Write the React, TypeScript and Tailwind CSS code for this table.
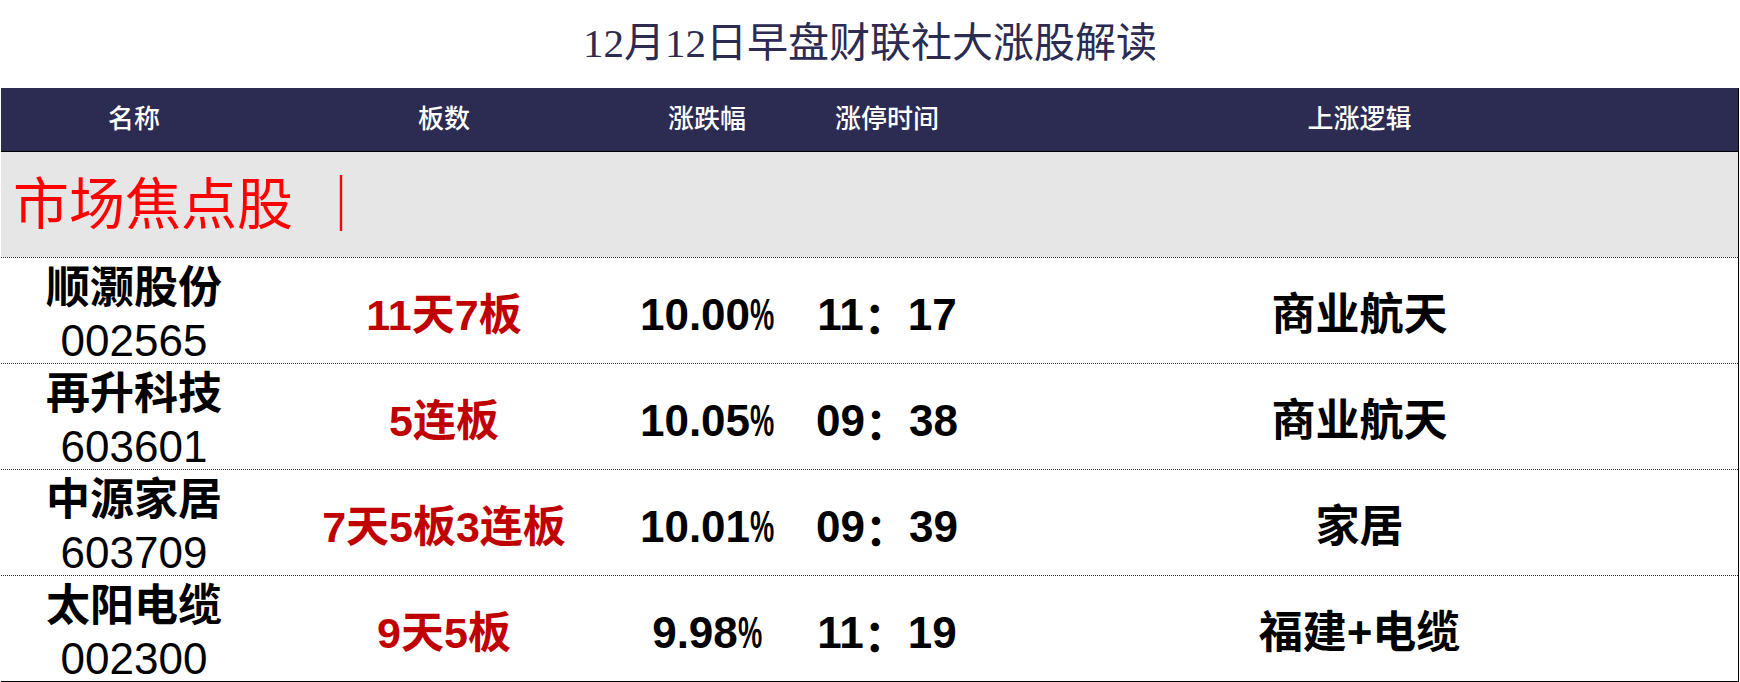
import React from "react";

const rows = [
  { name: "顺灏股份", code: "002565", board: "11天7板", pct: "10.00", hh: "11", mm: "17", logic: "商业航天" },
  { name: "再升科技", code: "603601", board: "5连板", pct: "10.05", hh: "09", mm: "38", logic: "商业航天" },
  { name: "中源家居", code: "603709", board: "7天5板3连板", pct: "10.01", hh: "09", mm: "39", logic: "家居" },
  { name: "太阳电缆", code: "002300", board: "9天5板", pct: "9.98", hh: "11", mm: "19", logic: "福建+电缆" },
];

const cols = "grid grid-cols-[266px_354px_172px_188px_1fr]";
const sans = "font-['Liberation_Sans','Noto_Sans_CJK_SC',sans-serif]";
const serif = "font-['Liberation_Serif','Noto_Sans_CJK_SC',serif]";

export default function App() {
  return (
    <div className="w-[1740px] h-[682px] bg-white overflow-hidden">
      <div className={`h-[88px] flex items-center justify-center text-[41px] text-[#2c2b51] ${serif}`}>
        12月12日早盘财联社大涨股解读
      </div>

      <div className="ml-[1px] mr-[1px] border-r border-black">
        {/* header */}
        <div className={`${cols} h-[64px] bg-[#2c2b51] border-b border-black text-white text-[26px] font-medium ${sans}`}>
          <div className="flex items-center justify-center">名称</div>
          <div className="flex items-center justify-center">板数</div>
          <div className="flex items-center justify-center">涨跌幅</div>
          <div className="flex items-center justify-center">涨停时间</div>
          <div className="flex items-center justify-center">上涨逻辑</div>
        </div>

        {/* section label */}
        <div className={`h-[105px] bg-[#e6e6e6] flex items-center pl-[12px] text-[56px] text-[#ff0000] ${serif}`}>
          <span>市场焦点股</span>
          <span className="ml-[20px]">｜</span>
        </div>

        <div className="border-b border-black">
          {rows.map((r) => (
            <div key={r.code} className={`${cols} h-[106px] pt-[4px] border-t border-dotted border-[#333] ${sans}`}>
              <div className="flex flex-col items-center justify-center text-black">
                <div className="text-[44px] leading-[52px] font-bold">{r.name}</div>
                <div className="text-[44px] leading-[54px]">{r.code}</div>
              </div>
              <div className="flex items-center justify-center text-[43px] font-bold text-[#c00000]">{r.board}</div>
              <div className="flex items-center justify-center text-[44px] font-bold text-black">
                <span>{r.pct}</span>
                <span className="inline-block w-[24px] origin-left scale-x-[0.62]">%</span>
              </div>
              <div className="flex items-center justify-center text-[44px] font-bold text-black">
                <span>{r.hh}</span>
                <span className="font-['Noto_Sans_CJK_SC',sans-serif]">：</span>
                <span>{r.mm}</span>
              </div>
              <div className="flex items-center justify-center text-[44px] font-bold text-black">{r.logic}</div>
            </div>
          ))}
        </div>
      </div>
    </div>
  );
}
